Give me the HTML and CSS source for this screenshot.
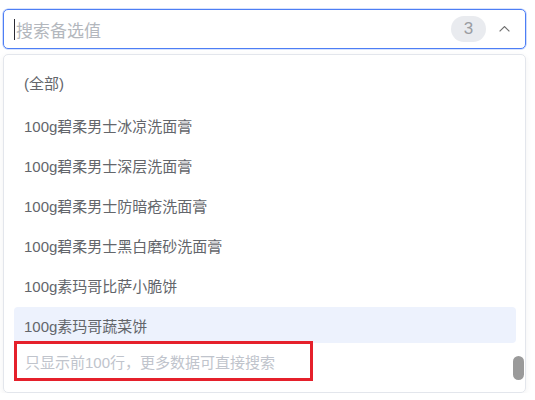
FILE: index.html
```html
<!DOCTYPE html>
<html lang="zh">
<head>
<meta charset="utf-8">
<link rel="stylesheet" href="styles.css">
</head>
<body>
<div class="select">
  <div class="input">
    <span class="caret"></span>
    <span class="placeholder">搜索备选值</span>
    <span class="badge">3</span>
    <svg class="chevron" width="11" height="6" viewBox="0 0 11 6"><polyline points="0.6,5.4 5.5,0.6 10.4,5.4" fill="none" stroke="#707070" stroke-width="1.2"/></svg>
  </div>
  <div class="dropdown">
    <div class="item all">(全部)</div>
    <div class="item">100g碧柔男士冰凉洗面膏</div>
    <div class="item">100g碧柔男士深层洗面膏</div>
    <div class="item">100g碧柔男士防暗疮洗面膏</div>
    <div class="item">100g碧柔男士黑白磨砂洗面膏</div>
    <div class="item">100g素玛哥比萨小脆饼</div>
    <div class="item active">100g素玛哥蔬菜饼</div>
    <div class="footer">只显示前100行，更多数据可直接搜索</div>
    <div class="thumb"></div>
  </div>
</div>
</body>
</html>
```
FILE: styles.css
```css
* { box-sizing: border-box; }
html, body { margin: 0; padding: 0; background: #fff; }
body {
  font-family: "Liberation Sans", "Noto Sans CJK SC", sans-serif;
  padding: 9px 0 0 3px;
}
.select { width: 523px; }
.input {
  height: 40px;
  border: 1px solid #4d7ef5;
  box-shadow: 0 0 0 0.6px rgba(77, 126, 245, 0.45);
  border-radius: 5px;
  display: flex;
  align-items: center;
  padding: 0 15px 0 10px;
}
.caret {
  width: 1px;
  height: 21px;
  background: #2a2a33;
}
.placeholder {
  margin-left: 1px;
  font-size: 17px;
  color: #b3b7bd;
  flex: 1;
}
.badge {
  width: 35px;
  height: 26px;
  border-radius: 13px;
  background: #e9ebef;
  color: #9a9da2;
  font-size: 17px;
  display: flex;
  align-items: center;
  justify-content: center;
  margin-right: 13px;
}
.chevron { display: block; }
.dropdown {
  position: relative;
  margin-top: 5px;
  border: 1px solid #e3e6ec;
  border-radius: 5px;
  box-shadow: 0 2px 6px rgba(0, 0, 0, 0.06);
  padding: 9px 9px 11px 10px;
}
.item {
  height: 36px;
  margin-bottom: 4px;
  padding-left: 10px;
  display: flex;
  align-items: center;
  font-size: 15px;
  color: #63666b;
  border-radius: 4px;
}
.item.all { margin-bottom: 7px; }
.item.active {
  background: #edf2fd;
  margin-bottom: 0;
}
.footer {
  margin-top: -2px;
  width: 299px;
  height: 40px;
  border: 3px solid #e5202b;
  padding-left: 8px;
  display: flex;
  align-items: center;
  font-size: 15px;
  color: #c0c4cc;
}
.thumb {
  position: absolute;
  right: 1px;
  top: 301px;
  width: 11px;
  height: 24px;
  border-radius: 6px;
  background: #9a9a9a;
}
```
